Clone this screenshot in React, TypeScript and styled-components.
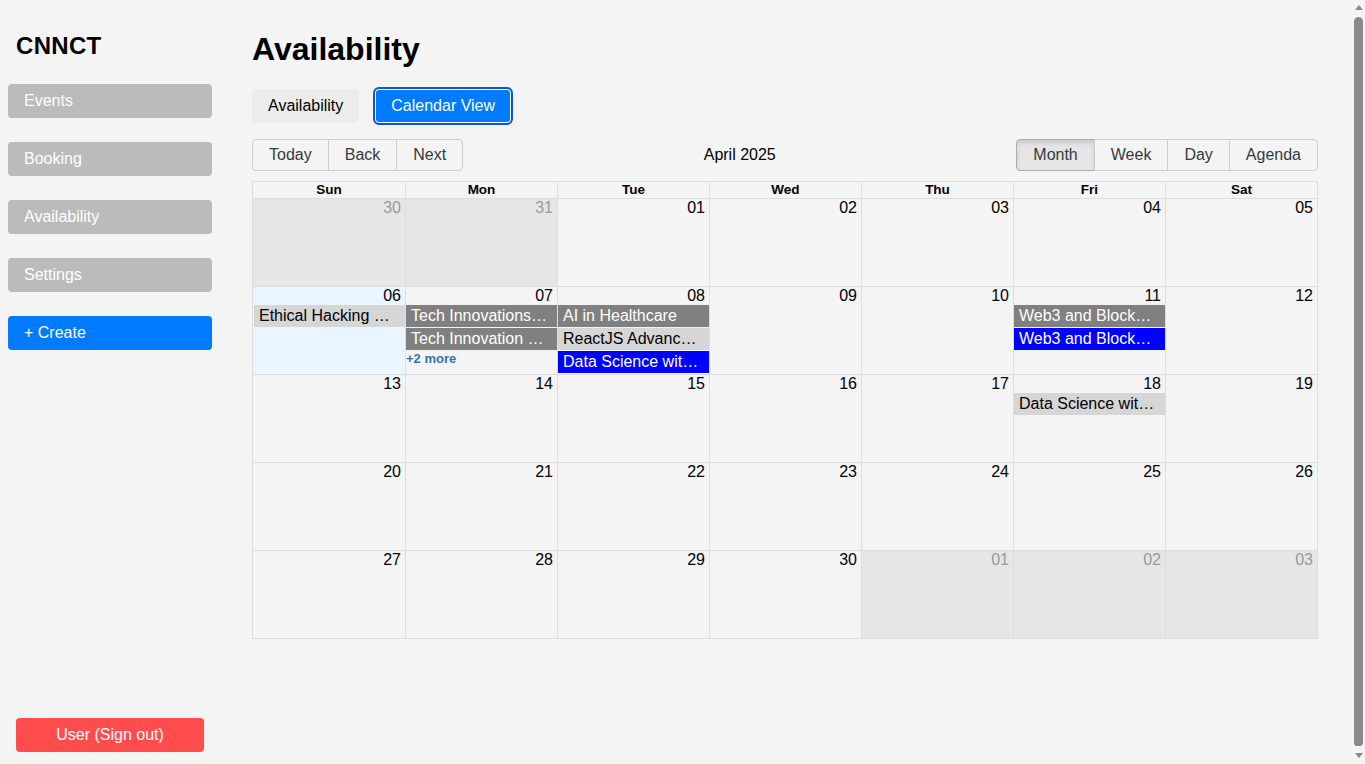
import React from "react";
import styled, { createGlobalStyle, css } from "styled-components";

const GlobalStyle = createGlobalStyle`
  html, body {
    background: #f4f4f4;
  }
  body {
    margin: 8px;
    font-family: "Liberation Sans", Arial, sans-serif;
    color: #000;
  }
  * { box-sizing: border-box; }
`;

const Layout = styled.div`
  display: flex;
  height: 100vh;
  padding-right: 15px;
`;

const Sidebar = styled.aside`
  width: 204px;
  flex-shrink: 0;
  display: flex;
  flex-direction: column;
  padding-bottom: 20px;
`;

const Logo = styled.div`
  font-size: 24px;
  font-weight: bold;
  margin: 24px 8px 24px 8px;
  line-height: 28px;
  letter-spacing: 0.3px;
`;

const NavButton = styled.button<{ $primary?: boolean }>`
  display: block;
  width: 100%;
  text-align: left;
  border: none;
  border-radius: 4px;
  padding: 8px 16px;
  height: 34px;
  margin-bottom: 24px;
  font-family: inherit;
  font-size: 16px;
  color: #fff;
  background: ${(p) => (p.$primary ? "#007bff" : "#bbbbbb")};
`;

const SignOut = styled.button`
  margin: auto 8px 0 8px;
  height: 34px;
  border: none;
  border-radius: 4px;
  background: #ff4d4d;
  color: #fff;
  font-family: inherit;
  font-size: 16px;
`;

const Main = styled.main`
  flex: 1;
  padding: 23px 24px 0 40px;
  min-width: 0;
`;

const Title = styled.h1`
  font-size: 32px;
  font-weight: bold;
  margin: 0 0 21px 0;
  line-height: 37px;
`;

const Tabs = styled.div`
  display: flex;
  gap: 16px;
  margin-bottom: 16px;
`;

const Tab = styled.button<{ $active?: boolean }>`
  height: 34px;
  padding: 0 16px;
  border: none;
  border-radius: 4px;
  font-family: inherit;
  font-size: 16px;
  background: #ececec;
  color: #000;
  ${(p) =>
    p.$active &&
    css`
      background: #007bff;
      color: #fff;
      outline: 2px solid #1256c4;
      outline-offset: 0;
      box-shadow: inset 0 0 0 1px #fff;
    `}
`;

const Toolbar = styled.div`
  display: flex;
  align-items: center;
  margin-bottom: 10px;
  font-size: 16px;
`;

const BtnGroup = styled.div`
  display: inline-flex;
`;

const ToolBtn = styled.button<{ $active?: boolean }>`
  font-family: inherit;
  font-size: 16px;
  color: #373a3c;
  background: none;
  border: 1px solid #ccc;
  padding: 6px 16px;
  line-height: normal;
  margin: 0;
  & + & {
    margin-left: -1px;
  }
  &:first-child {
    border-radius: 4px 0 0 4px;
  }
  &:last-child {
    border-radius: 0 4px 4px 0;
  }
  ${(p) =>
    p.$active &&
    css`
      background: #e6e6e6;
      border-color: #adadad;
      box-shadow: inset 0 3px 5px rgba(0, 0, 0, 0.125);
    `}
`;

const Label = styled.span`
  flex: 1;
  text-align: center;
  padding: 0 10px;
`;

const Calendar = styled.div`
  border: 1px solid #ddd;
  display: flex;
  flex-direction: column;
`;

const HeaderRow = styled.div`
  display: grid;
  grid-template-columns: repeat(7, 1fr);
`;

const HeaderCell = styled.div`
  text-align: center;
  font-weight: bold;
  font-size: 13.5px;
  line-height: 16px;
  & + & {
    border-left: 1px solid #ddd;
  }
`;

const Week = styled.div`
  display: grid;
  grid-template-columns: repeat(7, 1fr);
  grid-template-rows: 18px 23px 23px 23px;
  height: 88px;
  border-top: 1px solid #ddd;
`;

const BgCell = styled.div<{ $col: number; $off?: boolean; $today?: boolean }>`
  grid-row: 1 / -1;
  grid-column: ${(p) => p.$col + 1};
  background: ${(p) => (p.$off ? "#e6e6e6" : p.$today ? "#eaf6ff" : "transparent")};
  border-left: ${(p) => (p.$col === 0 ? "none" : "1px solid #ddd")};
`;

const DateNum = styled.div<{ $col: number; $off?: boolean }>`
  grid-row: 1;
  grid-column: ${(p) => p.$col + 1};
  text-align: right;
  padding-right: 4px;
  font-size: 16px;
  line-height: 18px;
  color: ${(p) => (p.$off ? "#999" : "#000")};
`;

type Kind = "gray" | "light" | "blue";

const EventSlot = styled.div<{ $col: number; $row: number }>`
  grid-column: ${(p) => p.$col + 1};
  grid-row: ${(p) => p.$row + 1};
  padding: 0 0 1px 1px;
  min-width: 0;
`;

const EventBox = styled.div<{ $kind: Kind }>`
  height: 22px;
  padding: 2px 5px;
  font-size: 16px;
  line-height: 18px;
  white-space: nowrap;
  overflow: hidden;
  text-overflow: ellipsis;
  background: ${(p) =>
    p.$kind === "gray" ? "#808080" : p.$kind === "blue" ? "#0000ff" : "#d6d6d6"};
  color: ${(p) => (p.$kind === "light" ? "#000" : "#fff")};
`;

const More = styled.div<{ $col: number; $row: number }>`
  grid-column: ${(p) => p.$col + 1};
  grid-row: ${(p) => p.$row + 1};
  font-size: 13px;
  font-weight: bold;
  color: #3174ad;
  line-height: 16px;
  padding: 0 0 0 1px;
`;

/* Decorative page scrollbar, drawn over the right edge of the window */
const ScrollTrack = styled.div`
  position: fixed;
  top: 0;
  right: 0;
  width: 15px;
  height: 100vh;
  background: #f4f4f4;
  display: flex;
  flex-direction: column;
  align-items: center;
  padding: 5px 0 6px 2px;
`;

const Arrow = styled.div<{ $down?: boolean }>`
  width: 0;
  height: 0;
  border-left: 4px solid transparent;
  border-right: 4px solid transparent;
  ${(p) =>
    p.$down
      ? css`
          border-top: 5px solid #8a8a8a;
          margin-top: 7px;
        `
      : css`
          border-bottom: 5px solid #8a8a8a;
          margin-bottom: 7px;
        `}
`;

const Thumb = styled.div`
  flex: 1;
  width: 9px;
  background: #8a8a8a;
  border-radius: 5px 5px 4px 4px;
`;

type Ev = { col: number; row: number; title: string; kind: Kind };
type WeekData = {
  days: { n: string; off?: boolean; today?: boolean }[];
  events: Ev[];
  more?: { col: number; row: number; text: string }[];
};

const days = ["Sun", "Mon", "Tue", "Wed", "Thu", "Fri", "Sat"];

const weeks: WeekData[] = [
  {
    days: [
      { n: "30", off: true },
      { n: "31", off: true },
      { n: "01" },
      { n: "02" },
      { n: "03" },
      { n: "04" },
      { n: "05" },
    ],
    events: [],
  },
  {
    days: [
      { n: "06", today: true },
      { n: "07" },
      { n: "08" },
      { n: "09" },
      { n: "10" },
      { n: "11" },
      { n: "12" },
    ],
    events: [
      { col: 0, row: 1, title: "Ethical Hacking …", kind: "light" },
      { col: 1, row: 1, title: "Tech Innovations…", kind: "gray" },
      { col: 1, row: 2, title: "Tech Innovation …", kind: "gray" },
      { col: 2, row: 1, title: "AI in Healthcare", kind: "gray" },
      { col: 2, row: 2, title: "ReactJS Advanc…", kind: "light" },
      { col: 2, row: 3, title: "Data Science wit…", kind: "blue" },
      { col: 5, row: 1, title: "Web3 and Block…", kind: "gray" },
      { col: 5, row: 2, title: "Web3 and Block…", kind: "blue" },
    ],
    more: [{ col: 1, row: 3, text: "+2 more" }],
  },
  {
    days: ["13", "14", "15", "16", "17", "18", "19"].map((n) => ({ n })),
    events: [{ col: 5, row: 1, title: "Data Science wit…", kind: "light" }],
  },
  {
    days: ["20", "21", "22", "23", "24", "25", "26"].map((n) => ({ n })),
    events: [],
  },
  {
    days: [
      { n: "27" },
      { n: "28" },
      { n: "29" },
      { n: "30" },
      { n: "01", off: true },
      { n: "02", off: true },
      { n: "03", off: true },
    ],
    events: [],
  },
];

export default function App() {
  return (
    <>
      <GlobalStyle />
      <Layout>
        <Sidebar>
          <Logo>CNNCT</Logo>
          <NavButton>Events</NavButton>
          <NavButton>Booking</NavButton>
          <NavButton>Availability</NavButton>
          <NavButton>Settings</NavButton>
          <NavButton $primary>+ Create</NavButton>
          <SignOut>User (Sign out)</SignOut>
        </Sidebar>
        <Main>
          <Title>Availability</Title>
          <Tabs>
            <Tab>Availability</Tab>
            <Tab $active>Calendar View</Tab>
          </Tabs>
          <Toolbar>
            <BtnGroup>
              <ToolBtn>Today</ToolBtn>
              <ToolBtn>Back</ToolBtn>
              <ToolBtn>Next</ToolBtn>
            </BtnGroup>
            <Label>April 2025</Label>
            <BtnGroup>
              <ToolBtn $active>Month</ToolBtn>
              <ToolBtn>Week</ToolBtn>
              <ToolBtn>Day</ToolBtn>
              <ToolBtn>Agenda</ToolBtn>
            </BtnGroup>
          </Toolbar>
          <Calendar>
            <HeaderRow>
              {days.map((d) => (
                <HeaderCell key={d}>{d}</HeaderCell>
              ))}
            </HeaderRow>
            {weeks.map((w, wi) => (
              <Week key={wi}>
                {w.days.map((d, i) => (
                  <BgCell key={"b" + i} $col={i} $off={d.off} $today={d.today} />
                ))}
                {w.days.map((d, i) => (
                  <DateNum key={"d" + i} $col={i} $off={d.off}>
                    {d.n}
                  </DateNum>
                ))}
                {w.events.map((e, i) => (
                  <EventSlot key={"e" + i} $col={e.col} $row={e.row}>
                    <EventBox $kind={e.kind}>{e.title}</EventBox>
                  </EventSlot>
                ))}
                {w.more?.map((m, i) => (
                  <More key={"m" + i} $col={m.col} $row={m.row}>
                    {m.text}
                  </More>
                ))}
              </Week>
            ))}
          </Calendar>
        </Main>
      </Layout>
      <ScrollTrack aria-hidden="true">
        <Arrow />
        <Thumb />
        <Arrow $down />
      </ScrollTrack>
    </>
  );
}
